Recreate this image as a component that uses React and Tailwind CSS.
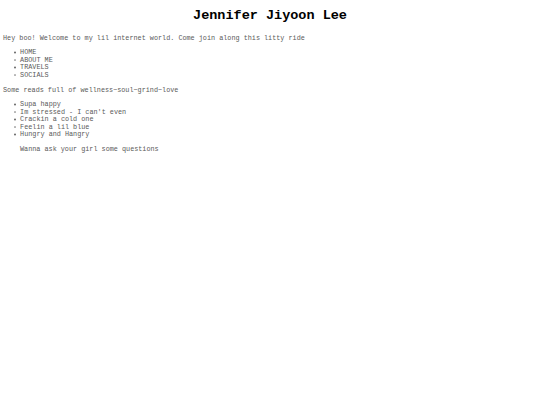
const nav = ["HOME", "ABOUT ME", "TRAVELS", "SOCIALS"];
const moods = ["Supa happy", "Im stressed - I can't even", "Crackin a cold one", "Feelin a lil blue", "Hungry and Hangry"];

function Bullets({ items }) {
  return (
    <ul className="mt-[6.5px] pl-[11px]">
      {items.map((it) => (
        <li key={it} className="flex items-center">
          <span className="mr-[4.5px] block h-[1.6px] w-[1.6px] -translate-y-[0.6px] rounded-full bg-[#666]" />
          {it}
        </li>
      ))}
    </ul>
  );
}

export default function App() {
  return (
    <div className="min-h-[405px] bg-white px-[3px] text-[6.8px] leading-[7.6px] text-[#5a5a5a]" style={{ fontFamily: '"Liberation Mono", "Courier New", monospace' }}>
      <h1 className="pt-[8px] text-center text-[13.5px] font-bold leading-[16px] text-black">Jennifer Jiyoon Lee</h1>
      <p className="mt-[11px]">Hey boo! Welcome to my lil internet world. Come join along this litty ride</p>
      <Bullets items={nav} />
      <p className="mt-[7.4px]">Some reads full of wellness~soul~grind~love</p>
      <Bullets items={moods} />
      <p className="mt-[7.4px] pl-[17px]">Wanna ask your girl some questions</p>
    </div>
  );
}
